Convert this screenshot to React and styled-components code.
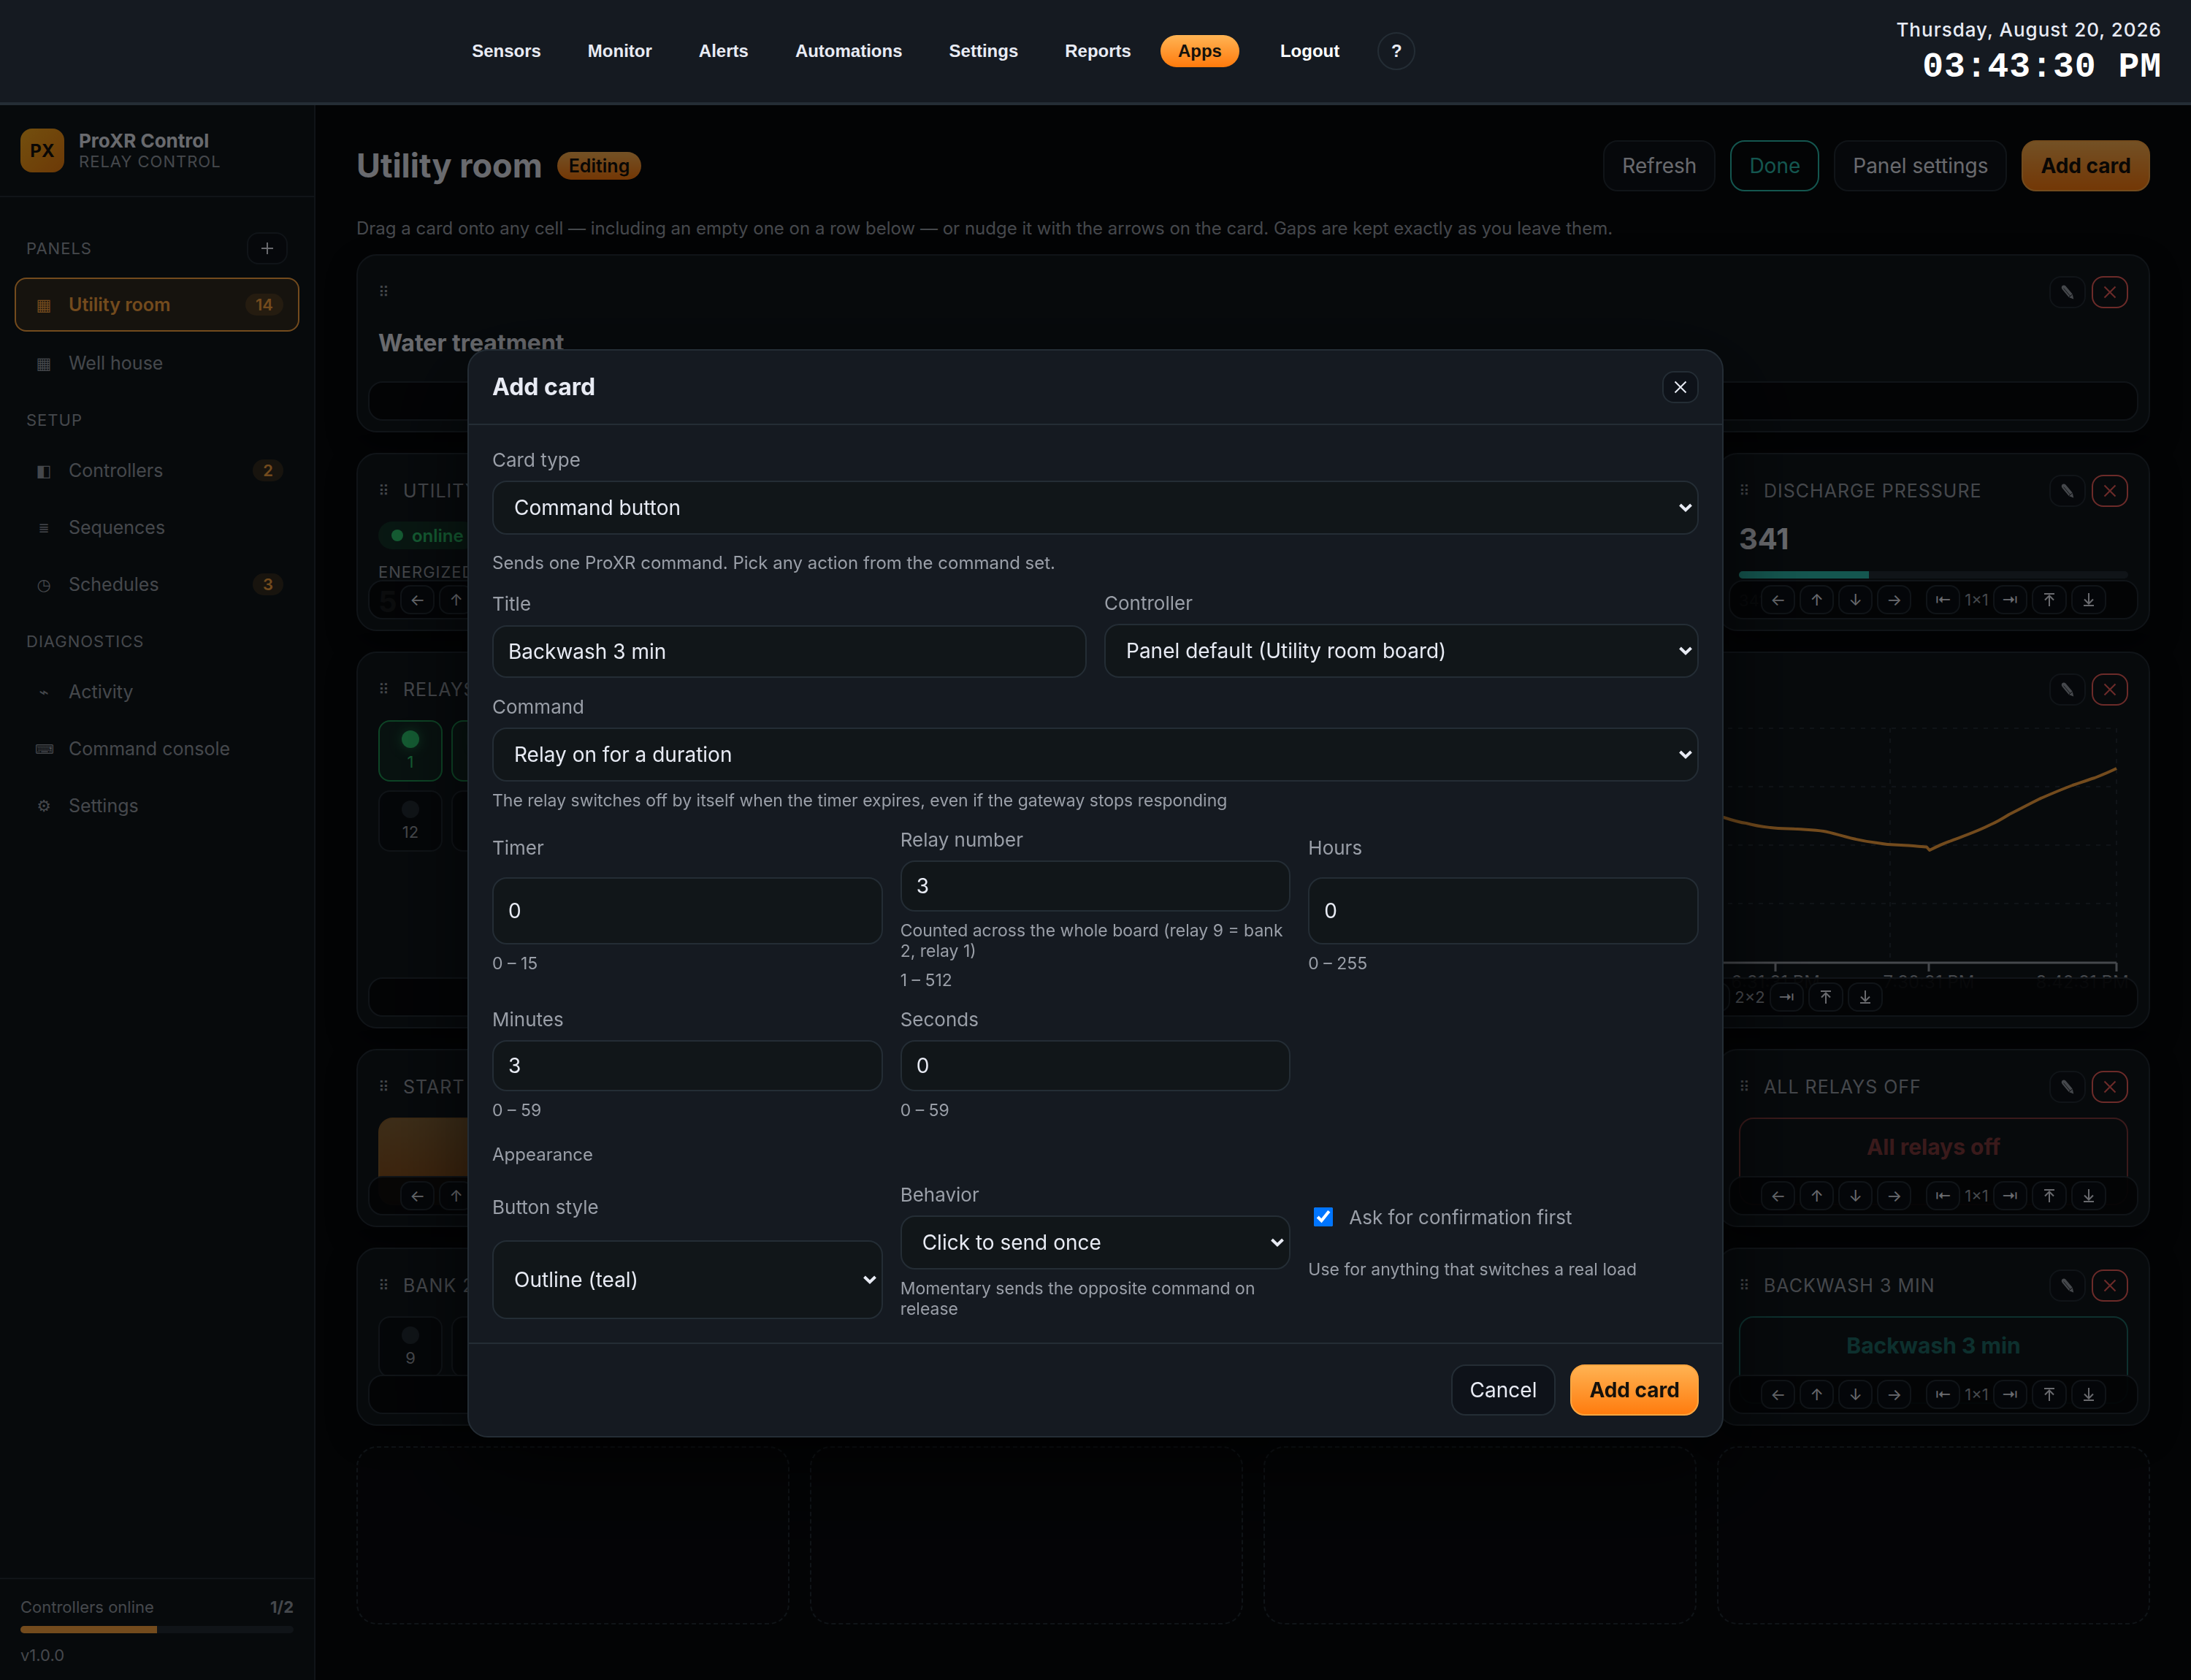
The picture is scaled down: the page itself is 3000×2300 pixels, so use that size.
import React from "react";
import styled, { createGlobalStyle, css } from "styled-components";

const c = {
  bg: "#07090c",
  side: "#10171c",
  panel: "#151a21",
  field: "#111619",
  line: "#242d35",
  text: "#e8ebf4",
  muted: "#9a9fa8",
  orange: "#ffa640",
  teal: "#2dbfb0",
  red: "#f0605c",
  green: "#2ecc71",
};
const amber = "linear-gradient(180deg, #ffb454, #ff7a0c)";

const Global = createGlobalStyle`
  * { box-sizing: border-box; }
  body { margin: 0; background: ${c.bg}; color: ${c.text}; font-family: Inter, "DejaVu Sans", sans-serif; font-size: 28px; }
  button, input, select { font: inherit; color: inherit; margin: 0; }
  h1, h2, h3, p, ul { margin: 0; padding: 0; }
  ul { list-style: none; }
  a { color: inherit; text-decoration: none; }
`;

/* ---------- top bar ---------- */

const Shell = styled.div`
  min-height: 100vh;
  display: flex;
  flex-direction: column;
`;
const TopBar = styled.header`
  height: 144px;
  padding: 0 40px;
  display: flex;
  align-items: center;
  background: ${c.panel};
  border-bottom: 4px solid ${c.line};
`;
const TopNav = styled.nav`
  flex: 1;
  display: flex;
  align-items: center;
  justify-content: center;
  gap: 16px;
  font: 700 24px/28px "Liberation Sans", Arial, sans-serif;
`;
const TopLink = styled.a`
  padding: 8px 24px;
  border-radius: 22px;
  ${(p) => p.$active && css`background: ${amber}; color: #14110c;`}
`;
const LogoutLink = styled.a`
  padding: 8px 36px 8px 40px;
  color: #fff;
`;
const HelpButton = styled.button`
  width: 52px;
  height: 52px;
  padding: 0;
  border: 2px solid ${c.line};
  border-radius: 50%;
  background: transparent;
`;
const Clock = styled.div`
  margin-left: 76px;
  padding-top: 4px;
  text-align: right;
`;
const ClockDate = styled.div`
  font-size: 26px;
  line-height: 32px;
  font-weight: 500;
  letter-spacing: 1px;
`;
const ClockTime = styled.div`
  margin-top: 8px;
  font: 700 48px/54px "Courier New", "Liberation Mono", monospace;
  letter-spacing: 1px;
  color: #fff;
`;

/* ---------- sidebar ---------- */

const Body = styled.div`
  flex: 1;
  display: flex;
`;
const Sidebar = styled.aside`
  width: 432px;
  flex: none;
  display: flex;
  flex-direction: column;
  background: ${c.side};
  border-right: 2px solid ${c.line};
`;
const Brand = styled.div`
  display: flex;
  align-items: center;
  gap: 20px;
  padding: 32px 28px;
  border-bottom: 2px solid ${c.line};
`;
const BrandMark = styled.div`
  width: 60px;
  height: 60px;
  border-radius: 16px;
  display: grid;
  place-items: center;
  background: linear-gradient(135deg, #ffb020, #f07f10);
  color: #14110c;
  font-size: 24px;
  font-weight: 700;
`;
const BrandName = styled.div`
  font-size: 26px;
  line-height: 30px;
  font-weight: 700;
`;
const BrandTag = styled.div`
  font-size: 22px;
  line-height: 26px;
  letter-spacing: 1px;
  color: ${c.muted};
`;
const SideNav = styled.nav`
  flex: 1;
  padding: 48px 20px 0;
`;
const Group = styled.section`
  & + & { margin-top: 27px; }
`;
const GroupHead = styled.div`
  display: flex;
  align-items: center;
  justify-content: space-between;
  padding: 0 16px 18px;
  font-size: 22px;
  line-height: 28px;
  letter-spacing: 1px;
  color: ${c.muted};
`;
const SmallButton = styled.button`
  height: 44px;
  min-width: 50px;
  padding: 0;
  display: grid;
  place-items: center;
  border: 2px solid ${(p) => (p.$danger ? c.red : c.line)};
  border-radius: 16px;
  background: ${(p) => (p.$danger ? "transparent" : "#0e1219")};
  color: ${(p) => (p.$danger ? c.red : p.$soft ? c.muted : c.text)};
`;
const PlusButton = styled(SmallButton)`
  width: 56px;
`;
const Glyph = styled.svg`
  width: 24px;
  height: 24px;
  fill: none;
  stroke: currentColor;
  stroke-width: 2;
`;
const NavList = styled.ul`
  display: grid;
  gap: ${(p) => p.$gap}px;
`;
const NavItem = styled.a`
  display: flex;
  align-items: center;
  height: 74px;
  padding: 0 20px 0 26px;
  border: 2px solid transparent;
  border-radius: 16px;
  font-size: 25px;
  color: ${c.muted};
  ${(p) => p.$active && css`
    border-color: ${c.orange};
    background: rgba(255, 166, 64, 0.14);
    color: ${c.orange};
    font-weight: 600;
  `}
`;
const NavGlyph = styled.span`
  width: 24px;
  margin-right: 22px;
  text-align: center;
  font-family: "DejaVu Sans", sans-serif;
  font-size: ${(p) => (p.$small ? 18 : 22)}px;
`;
const Count = styled.span`
  margin-left: auto;
  padding: 0 14px;
  border-radius: 15px;
  background: rgba(255, 166, 64, 0.16);
  color: ${c.orange};
  font-size: 22px;
  line-height: 30px;
  font-weight: 600;
`;
const SideFoot = styled.div`
  padding: 24px 28px 20px;
  border-top: 2px solid ${c.line};
  font-size: 22px;
  line-height: 28px;
  color: ${c.muted};
`;
const FootRow = styled.div`
  display: flex;
  justify-content: space-between;
  margin-bottom: 12px;
`;
const Track = styled.div`
  height: 10px;
  border-radius: 5px;
  overflow: hidden;
  background: ${c.line};
`;
const Fill = styled.div`
  height: 100%;
  background: ${(p) => p.$color};
`;
const Version = styled.div`
  margin-top: 16px;
`;

/* ---------- page ---------- */

const Main = styled.main`
  flex: 1;
  min-width: 0;
  padding: 48px 56px;
`;
const PageHead = styled.div`
  display: flex;
  align-items: center;
  gap: 20px;
`;
const PageTitle = styled.h1`
  font-size: 45px;
  line-height: 54px;
  font-weight: 700;
`;
const EditingTag = styled.span`
  padding: 0 16px;
  border-radius: 19px;
  background: ${amber};
  color: #14110c;
  font-size: 25px;
  line-height: 38px;
  font-weight: 600;
`;
const PageActions = styled.div`
  margin-left: auto;
  display: flex;
  gap: 20px;
`;
const Button = styled.button`
  height: 70px;
  padding: 0 24px;
  border: 2px solid ${c.line};
  border-radius: 20px;
  background: #0e1219;
  font-size: 28px;
  ${(p) => p.$kind === "primary" && css`
    border-color: ${c.orange};
    background: ${amber} border-box;
    color: #14110c;
    font-weight: 700;
  `}
  ${(p) => p.$kind === "teal" && css`
    border-color: ${c.teal};
    background: transparent;
    color: ${c.teal};
  `}
`;
const Tip = styled.p`
  margin: 36px 0 20px;
  font-size: 24px;
  line-height: 30px;
  color: ${c.muted};
`;
const Grid = styled.div`
  display: grid;
  grid-template-columns: repeat(4, minmax(0, 1fr));
  grid-auto-rows: 244px;
  gap: 28px;
`;
const Card = styled.article`
  position: relative;
  grid-column: ${(p) => p.$col};
  grid-row: ${(p) => p.$row};
  min-width: 0;
  padding: 28px;
  border: 2px solid ${c.line};
  border-radius: 28px;
  background: ${c.side};
  box-shadow: 0 16px 40px rgba(0, 0, 0, 0.4);
  overflow: hidden;
`;
const EmptyCell = styled.div`
  grid-row: 7;
  border: 2px dashed ${c.line};
  border-radius: 28px;
  background: rgba(255, 255, 255, 0.012);
`;
const CardHead = styled.div`
  display: flex;
  align-items: center;
  gap: 8px;
  height: 44px;
  margin-bottom: 20px;
`;
const Handle = styled.span`
  width: 26px;
  font-family: "DejaVu Sans", sans-serif;
  font-size: 20px;
  color: ${c.muted};
`;
const CardTitle = styled.h3`
  flex: 1;
  font-size: 25px;
  font-weight: 400;
  letter-spacing: 1px;
  white-space: nowrap;
  overflow: hidden;
  color: ${c.muted};
`;
const Tools = styled.div`
  position: absolute;
  left: 14px;
  right: 14px;
  bottom: 14px;
  height: 54px;
  display: flex;
  align-items: center;
  justify-content: center;
  gap: 6px;
  border: 2px solid ${c.line};
  border-radius: 20px;
  background: rgba(7, 9, 12, 0.92);
  color: ${c.muted};
  font-size: 22px;
`;
const ToolButton = styled.button`
  height: 40px;
  min-width: 47px;
  padding: 0 10px;
  border: 2px solid ${c.line};
  border-radius: 14px;
  background: #0b0f15;
  color: ${c.text};
  font-size: 22px;
  line-height: 30px;
`;
const BarGlyph = styled(Glyph)`
  display: block;
  margin: 0 auto;
`;
const ToolGap = styled.span`
  width: 8px;
`;
const Heading = styled.h2`
  font-size: 32px;
  line-height: 56px;
  font-weight: 700;
`;
const Big = styled.div`
  font-size: 40px;
  line-height: 48px;
  font-weight: 700;
`;
const GaugeTrack = styled(Track)`
  margin: 20px 0 16px;
`;
const GaugeNote = styled.div`
  font-size: 22px;
  line-height: 28px;
  color: ${c.muted};
`;
const Online = styled.span`
  display: inline-flex;
  align-items: center;
  gap: 12px;
  height: 38px;
  padding: 0 18px;
  border-radius: 19px;
  background: rgba(46, 204, 113, 0.16);
  color: ${c.green};
  font-size: 24px;
  font-weight: 600;
`;
const Dot = styled.i`
  width: 16px;
  height: 16px;
  border-radius: 50%;
  background: currentColor;
`;
const StatLabel = styled.div`
  margin: 18px 0 4px;
  font-size: 22px;
  line-height: 26px;
  letter-spacing: 1px;
  color: ${c.muted};
`;
const Relays = styled.div`
  display: grid;
  grid-template-columns: repeat(auto-fill, 88px);
  gap: 12px;
`;
const Relay = styled.button`
  height: 84px;
  padding: 0;
  display: flex;
  flex-direction: column;
  align-items: center;
  justify-content: center;
  gap: 6px;
  border: 2px solid ${(p) => (p.$on ? "#1f9a55" : c.line)};
  border-radius: 16px;
  background: ${(p) => (p.$on ? "rgba(46, 204, 113, 0.1)" : "#0b0f14")};
  color: ${(p) => (p.$on ? c.green : c.muted)};
  font-size: 22px;
  line-height: 26px;
`;
const Lamp = styled.i`
  width: 24px;
  height: 24px;
  border-radius: 50%;
  background: ${(p) => (p.$on ? c.green : c.line)};
  box-shadow: ${(p) => (p.$on ? "0 0 16px rgba(46, 204, 113, 0.5)" : "none")};
`;
const Action = styled.button`
  width: 100%;
  height: 120px;
  padding: 20px 0 0;
  display: flex;
  align-items: flex-start;
  justify-content: center;
  border: 2px solid currentColor;
  border-radius: 20px;
  background: transparent;
  color: ${(p) => p.$color};
  opacity: 0.5;
  font-size: 30px;
  line-height: 36px;
  font-weight: 700;
  ${(p) => p.$filled && css`
    border-color: ${c.orange};
    background: ${amber} border-box;
  `}
`;
const Chart = styled.svg`
  display: block;
  width: 100%;
  height: auto;
  font-size: 24px;
  fill: ${c.muted};
`;

/* ---------- dialog ---------- */

const Overlay = styled.div`
  position: fixed;
  inset: 144px 0 0;
  padding-top: 2px;
  display: grid;
  place-items: center;
  background: rgba(0, 0, 0, 0.55);
`;
const Dialog = styled.section`
  width: min(1720px, calc(100% - 80px));
  border: 2px solid ${c.line};
  border-radius: 28px;
  background: ${c.panel};
  box-shadow: 0 40px 120px rgba(0, 0, 0, 0.6);
`;
const DialogHead = styled.div`
  display: flex;
  align-items: center;
  justify-content: space-between;
  padding: 28px 32px;
  border-bottom: 2px solid ${c.line};
`;
const DialogTitle = styled.h2`
  font-size: 32px;
  line-height: 44px;
  font-weight: 700;
`;
const DialogBody = styled.form`
  display: grid;
  gap: 24px;
  padding: 32px;
`;
const Row = styled.div`
  display: grid;
  grid-template-columns: repeat(${(p) => p.$cols}, minmax(0, 1fr));
  gap: 24px;
`;
const Field = styled.div`
  display: grid;
  gap: 12px;
`;
const Label = styled.label`
  align-self: center;
  font-size: 26px;
  line-height: 32px;
  color: ${c.muted};
`;
const control = css`
  width: 100%;
  border: 2px solid ${c.line};
  border-radius: 20px;
  background: ${c.field};
  color: ${c.text};
  font-size: 28px;
`;
const Input = styled.input`
  ${control}
  min-height: 70px;
  padding: 0 20px;
  appearance: textfield;
  &::-webkit-inner-spin-button { appearance: none; }
`;
const SelectWrap = styled.div`
  position: relative;
  display: grid;
`;
const Select = styled.select`
  ${control}
  min-height: 74px;
  padding: 0 48px 0 28px;
  appearance: none;
`;
const Chevron = styled.svg`
  position: absolute;
  right: 8px;
  top: 50%;
  width: 20px;
  height: 12px;
  margin-top: -6px;
  pointer-events: none;
`;
const Hint = styled.p`
  font-size: 23px;
  line-height: 28px;
  color: ${c.muted};
`;
const Note = styled.p`
  font-size: 24px;
  line-height: 30px;
  color: ${c.muted};
`;
const GroupNote = styled(Note)`
  padding-top: 8px;
`;
const CheckLabel = styled.label`
  display: flex;
  align-items: center;
  min-height: 38px;
  padding-left: 8px;
  gap: 22px;
  font-size: 26px;
  color: ${c.muted};
`;
const CheckBox = styled.input`
  width: 26px;
  height: 26px;
`;
const DialogFoot = styled.div`
  display: flex;
  justify-content: flex-end;
  gap: 20px;
  padding: 28px 32px;
  border-top: 2px solid ${c.line};
`;

function CrossIcon() {
  return (
    <Glyph viewBox="0 0 24 24" aria-hidden="true">
      <path d="M4.500 4.500 19.500 19.500M19.500 4.500 4.500 19.500" />
    </Glyph>
  );
}

function PencilIcon() {
  return (
    <Glyph viewBox="0 0 24 24" aria-hidden="true">
      <path
        d="M4.500 3.500C6 2 8 2 9.300 3.600L18.800 14.800 20.200 21.500 13.800 18.900 4.600 8C3.500 6.500 3.500 4.700 4.500 3.500Z"
        fill="currentColor" stroke="none"
      />
      <path d="M13.800 18.900 18.800 14.800" stroke="#0e1219" strokeWidth="1" />
      <path d="M6.600 6.600 15.500 17.200" stroke="#0e1219" strokeWidth="0.800" />
    </Glyph>
  );
}

function ToBarIcon({ turn }) {
  return (
    <BarGlyph viewBox="0 0 24 24" aria-hidden="true">
      <path transform={`rotate(${turn} 12 12)`} d="M5 4H19M12 21V6M6 12.500 12 6.500 18 12.500" />
    </BarGlyph>
  );
}

function CardTools({ size }) {
  return (
    <Tools>
      <ToolButton aria-label="Move left">←</ToolButton>
      <ToolButton aria-label="Move up">↑</ToolButton>
      <ToolButton aria-label="Move down">↓</ToolButton>
      <ToolButton aria-label="Move right">→</ToolButton>
      <ToolGap />
      <ToolButton aria-label="Narrower">⇤</ToolButton>
      <span>{size}</span>
      <ToolButton aria-label="Wider">⇥</ToolButton>
      <ToolButton aria-label="Shorter"><ToBarIcon turn={0} /></ToolButton>
      <ToolButton aria-label="Taller"><ToBarIcon turn={180} /></ToolButton>
    </Tools>
  );
}

function PanelCard({ col, row, title, size, children }) {
  return (
    <Card $col={col} $row={row}>
      <CardHead>
        <Handle>⠿</Handle>
        <CardTitle>{title}</CardTitle>
        <SmallButton $soft aria-label="Edit card"><PencilIcon /></SmallButton>
        <SmallButton $danger aria-label="Remove card"><CrossIcon /></SmallButton>
      </CardHead>
      {children}
      <CardTools size={size} />
    </Card>
  );
}

function RelayTile({ n, on }) {
  return (
    <Relay $on={on}>
      <Lamp $on={on} />
      {n}
    </Relay>
  );
}

function SelectField({ id, label, value, hint }) {
  return (
    <Field>
      <Label htmlFor={id}>{label}</Label>
      <SelectWrap>
        <Select id={id} defaultValue={value}>
          <option>{value}</option>
        </Select>
        <Chevron viewBox="0 0 20 12" fill="none" stroke={c.text} strokeWidth="4">
          <path d="M2.500 2 10 9.200 17.500 2" />
        </Chevron>
      </SelectWrap>
      {hint && <Hint>{hint}</Hint>}
    </Field>
  );
}

function InputField({ id, label, value, hints = [], type = "number" }) {
  return (
    <Field>
      <Label htmlFor={id}>{label}</Label>
      <Input id={id} type={type} defaultValue={value} />
      {hints.map((h) => <Hint key={h}>{h}</Hint>)}
    </Field>
  );
}

function NavEntry({ glyph, label, count, active, small }) {
  return (
    <li>
      <NavItem href="#" $active={active}>
        <NavGlyph $small={small}>{glyph}</NavGlyph>
        {label}
        {count && <Count>{count}</Count>}
      </NavItem>
    </li>
  );
}

function TrendChart() {
  return (
    <Chart viewBox="0 0 1154 392" role="img" aria-label="Trend">
      <g stroke={c.line} strokeWidth="2" strokeDasharray="6 8" fill="none">
        {[11, 91, 171, 251].map((y) => <path key={y} d={`M60 ${y}H1138`} />)}
        {[208, 518, 828, 1138].map((x) => <path key={x} d={`M${x} 11V332`} />)}
      </g>
      <path d="M60 332H1138M671 332v12M881 332v12M1138 332v12" stroke={c.muted} strokeWidth="3" fill="none" />
      <path
        d="M560 120 C575 126 590 131 600 133 C612 137 622 140 631 141 C645 145 655 146 664 147 C680 149 690 148 701 149 C715 150 725 150 737 152 C748 154 757 157 767 159.500 C780 163 795 166 807 167.500 C820 170 832 171 843 171 C855 171.500 870 173 878 173.500 L882 178 C890 174 900 169 909 166 C930 158 948 152 965.500 143 C975 139 983 134 991 129 C1005 122 1018 115 1032 108 C1048 101 1062 95 1078 89 C1090 85 1098 82 1108 79 C1118 75 1128 71 1138 66"
        stroke={c.orange} strokeWidth="4" strokeLinejoin="round" fill="none"
      />
      <g textAnchor="middle">
        <text x="671" y="367">6:31:31 PM</text>
        <text x="881" y="367">7:30:31 PM</text>
        <text x="1091" y="367">8:42:31 PM</text>
      </g>
    </Chart>
  );
}

export default function App() {
  return (
    <Shell>
      <Global />
      <TopBar>
        <TopNav>
          {["Sensors", "Monitor", "Alerts", "Automations", "Settings", "Reports", "Apps"].map((t) => (
            <TopLink key={t} href="#" $active={t === "Apps"}>{t}</TopLink>
          ))}
          <LogoutLink href="#">Logout</LogoutLink>
          <HelpButton aria-label="Help">?</HelpButton>
        </TopNav>
        <Clock>
          <ClockDate>Thursday, August 20, 2026</ClockDate>
          <ClockTime>03:43:30 PM</ClockTime>
        </Clock>
      </TopBar>

      <Body>
        <Sidebar>
          <Brand>
            <BrandMark>PX</BrandMark>
            <div>
              <BrandName>ProXR Control</BrandName>
              <BrandTag>RELAY CONTROL</BrandTag>
            </div>
          </Brand>
          <SideNav>
            <Group>
              <GroupHead>
                PANELS
                <PlusButton aria-label="Add panel">
                  <Glyph viewBox="0 0 24 24" aria-hidden="true"><path d="M12 4V20M4 12H20" /></Glyph>
                </PlusButton>
              </GroupHead>
              <NavList $gap={6}>
                <NavEntry glyph="▦" label="Utility room" count="14" active />
                <NavEntry glyph="▦" label="Well house" />
              </NavList>
            </Group>
            <Group>
              <GroupHead>SETUP</GroupHead>
              <NavList $gap={4}>
                <NavEntry glyph="◧" label="Controllers" count="2" />
                <NavEntry glyph="≣" label="Sequences" small />
                <NavEntry glyph="◷" label="Schedules" count="3" />
              </NavList>
            </Group>
            <Group>
              <GroupHead>DIAGNOSTICS</GroupHead>
              <NavList $gap={4}>
                <NavEntry glyph="⌁" label="Activity" />
                <NavEntry glyph="⌨" label="Command console" small />
                <NavEntry glyph="⚙" label="Settings" />
              </NavList>
            </Group>
          </SideNav>
          <SideFoot>
            <FootRow>
              <span>Controllers online</span>
              <b>1/2</b>
            </FootRow>
            <Track><Fill $color={c.orange} style={{ width: `${(1 / 2) * 100}%` }} /></Track>
            <Version>v1.0.0</Version>
          </SideFoot>
        </Sidebar>

        <Main>
          <PageHead>
            <PageTitle>Utility room</PageTitle>
            <EditingTag>Editing</EditingTag>
            <PageActions>
              <Button>Refresh</Button>
              <Button $kind="teal">Done</Button>
              <Button>Panel settings</Button>
              <Button $kind="primary">Add card</Button>
            </PageActions>
          </PageHead>
          <Tip>
            Drag a card onto any cell — including an empty one on a row below — or nudge it with the arrows on the card. Gaps are kept exactly as you leave them.
          </Tip>
          <Grid>
            <PanelCard col="1 / -1" row="1" size="4×1">
              <Heading>Water treatment</Heading>
            </PanelCard>
            <PanelCard col="1" row="2" title="UTILITY ROOM" size="1×1">
              <Online><Dot />online</Online>
              <StatLabel>ENERGIZED</StatLabel>
              <Big>5</Big>
            </PanelCard>
            <PanelCard col="4" row="2" title="DISCHARGE PRESSURE" size="1×1">
              <Big>341</Big>
              <GaugeTrack><Fill $color={c.teal} style={{ width: `${(341 / 1023) * 100}%` }} /></GaugeTrack>
              <GaugeNote>341</GaugeNote>
            </PanelCard>
            <PanelCard col="1 / 3" row="3 / 5" title="RELAYS" size="2×2">
              <Relays>
                {Array.from({ length: 16 }, (_, i) => <RelayTile key={i} n={i + 1} on={i < 2} />)}
              </Relays>
            </PanelCard>
            <PanelCard col="3 / 5" row="3 / 5" size="2×2">
              <TrendChart />
            </PanelCard>
            <PanelCard col="1" row="5" title="START" size="1×1">
              <Action $filled $color="#14110c" aria-label="Start" />
            </PanelCard>
            <PanelCard col="4" row="5" title="ALL RELAYS OFF" size="1×1">
              <Action $color={c.red}>All relays off</Action>
            </PanelCard>
            <PanelCard col="1 / 3" row="6" title="BANK 2" size="2×1">
              <Relays>
                {Array.from({ length: 8 }, (_, i) => <RelayTile key={i} n={i + 9} />)}
              </Relays>
            </PanelCard>
            <PanelCard col="4" row="6" title="BACKWASH 3 MIN" size="1×1">
              <Action $color={c.teal}>Backwash 3 min</Action>
            </PanelCard>
            <EmptyCell />
            <EmptyCell />
            <EmptyCell />
            <EmptyCell />
          </Grid>
        </Main>
      </Body>

      <Overlay>
        <Dialog role="dialog" aria-labelledby="dialog-title">
          <DialogHead>
            <DialogTitle id="dialog-title">Add card</DialogTitle>
            <SmallButton aria-label="Close"><CrossIcon /></SmallButton>
          </DialogHead>
          <DialogBody id="card-form">
            <SelectField id="card-type" label="Card type" value="Command button" />
            <Note>Sends one ProXR command. Pick any action from the command set.</Note>
            <Row $cols={2}>
              <InputField id="title" label="Title" type="text" value="Backwash 3 min" />
              <SelectField id="controller" label="Controller" value="Panel default (Utility room board)" />
            </Row>
            <SelectField
              id="command"
              label="Command"
              value="Relay on for a duration"
              hint="The relay switches off by itself when the timer expires, even if the gateway stops responding"
            />
            <Row $cols={3}>
              <InputField id="timer" label="Timer" value="0" hints={["0 – 15"]} />
              <InputField
                id="relay"
                label="Relay number"
                value="3"
                hints={["Counted across the whole board (relay 9 = bank 2, relay 1)", "1 – 512"]}
              />
              <InputField id="hours" label="Hours" value="0" hints={["0 – 255"]} />
              <InputField id="minutes" label="Minutes" value="3" hints={["0 – 59"]} />
              <InputField id="seconds" label="Seconds" value="0" hints={["0 – 59"]} />
            </Row>
            <GroupNote>Appearance</GroupNote>
            <Row $cols={3}>
              <SelectField id="style" label="Button style" value="Outline (teal)" />
              <SelectField
                id="behavior"
                label="Behavior"
                value="Click to send once"
                hint="Momentary sends the opposite command on release"
              />
              <Field>
                <CheckLabel htmlFor="confirm">
                  <CheckBox id="confirm" type="checkbox" defaultChecked />
                  Ask for confirmation first
                </CheckLabel>
                <Hint>Use for anything that switches a real load</Hint>
              </Field>
            </Row>
          </DialogBody>
          <DialogFoot>
            <Button>Cancel</Button>
            <Button $kind="primary" type="submit" form="card-form">Add card</Button>
          </DialogFoot>
        </Dialog>
      </Overlay>
    </Shell>
  );
}
